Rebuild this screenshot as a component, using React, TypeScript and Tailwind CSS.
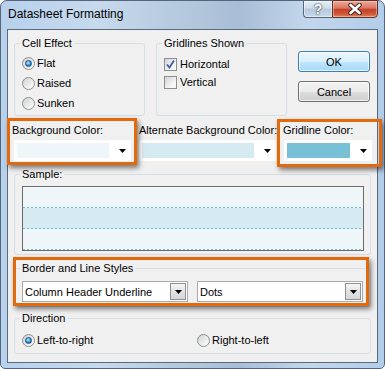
import React from 'react';

const Arrow = () => (
  <svg width="7" height="4" viewBox="0 0 7 4" className="block shrink-0">
    <polygon points="0,0 7,0 3.5,4" fill="#000" />
  </svg>
);

const Radio = ({ checked }: { checked?: boolean }) => (
  <span className="w-[13px] h-[13px] rounded-full border border-[#8e8f8f] bg-[linear-gradient(135deg,#cfd1d4,#ffffff)] flex items-center justify-center shrink-0">
    {checked && (
      <span className="w-[7px] h-[7px] rounded-full border border-[#184f86] bg-[radial-gradient(circle_at_40%_35%,#c4ecff,#2f93d8_55%,#0e4d8c)]" />
    )}
  </span>
);

const CheckBox = ({ checked }: { checked?: boolean }) => (
  <span className="w-[13px] h-[13px] border border-[#8e8f8f] bg-[linear-gradient(135deg,#d0d3d8,#f7f7f7_70%)] flex items-center justify-center shrink-0">
    {checked && (
      <svg width="11" height="11" viewBox="0 0 11 11" className="block">
        <path d="M2 5.5 L4.5 8.5 L9 1.5" fill="none" stroke="#3b5ea5" strokeWidth="1.8" />
      </svg>
    )}
  </span>
);

const ColorDrop = ({ swatch, width }: { swatch: string; width: string }) => (
  <div className={`h-[21px] bg-white flex items-center pl-[3px] pr-[5px] ${width}`}>
    <div className={`flex-1 h-[15px] ${swatch}`} />
    <div className="ml-[10px]">
      <Arrow />
    </div>
  </div>
);

const Combo = ({ text }: { text: string }) => (
  <div className="w-[166px] h-[21px] border border-[#a9abb0] bg-white flex items-center pl-[2px]">
    <span className="flex-1 leading-[14px]">{text}</span>
    <span className="w-[16px] h-[17px] mr-[1px] border border-[#8f9194] bg-[linear-gradient(#f6f6f6,#e2e2e2_50%,#d6d6d6)] flex items-center justify-center">
      <Arrow />
    </span>
  </div>
);

const Group = ({
  label,
  className,
  children,
}: {
  label: string;
  className?: string;
  children: React.ReactNode;
}) => (
  <fieldset className={`border border-[#d5dfe5] rounded-[3px] ${className ?? ''}`}>
    <legend className="ml-[5px] px-[2px] leading-[14px]">{label}</legend>
    {children}
  </fieldset>
);

// orange annotation frames drawn over the dialog
const Highlight = ({ className }: { className: string }) => (
  <div
    className={`absolute border-[3px] border-[#e4690b] shadow-[2px_3px_5px_rgba(0,0,0,0.5)] pointer-events-none ${className}`}
  />
);

export default function App() {
  return (
    <div className="w-[385px] h-[369px] relative font-['Liberation_Sans',Arial,sans-serif] text-[11px] text-black select-none">
      <div className="w-full h-full rounded-t-[7px] rounded-b-[5px] border border-[#55667a] bg-[linear-gradient(90deg,#b7d1ec,#c6d9ed_25%,#b3c7dc_50%,#a8bed6_62%,#c2d6eb_80%,#b2cdea)] flex flex-col px-[6px]">
        {/* title bar */}
        <div className="h-[28px] flex items-start justify-between">
          <span className="pl-[1px] pt-[6px] text-[12px] leading-[14px]">Datasheet Formatting</span>
          <div className="flex -mt-[1px]">
            <div className="w-[29px] h-[18px] border border-[#56677b] border-r-0 rounded-bl-[4px] bg-[linear-gradient(#e6eef6,#cfdcea_45%,#b5c7da_50%,#c9d9ea)] shadow-[inset_0_0_0_1px_rgba(255,255,255,0.45)] flex items-center justify-center">
              <span className="text-[14px] font-bold leading-none text-white [text-shadow:0_0_1px_#2a3645,0_0_2px_#2a3645]">?</span>
            </div>
            <div className="w-[46px] h-[18px] border border-[#5e3327] rounded-br-[4px] bg-[linear-gradient(#eaab9c,#d9755f_45%,#c6402a_52%,#cf5638_80%,#e0865c)] shadow-[inset_0_0_0_1px_rgba(255,220,210,0.45)] flex items-center justify-center">
              <svg width="16" height="12" viewBox="0 0 16 12" className="block">
                <path d="M3.5 2 L12.5 10 M12.5 2 L3.5 10" stroke="#3a2420" strokeWidth="4.4" strokeLinecap="round" />
                <path d="M3.5 2 L12.5 10 M12.5 2 L3.5 10" stroke="#ffffff" strokeWidth="2.6" strokeLinecap="round" />
              </svg>
            </div>
          </div>
        </div>

        {/* client */}
        <div className="h-[334px] border border-[#5a6a7b] bg-[#f0f0f0] flex flex-col">
          <div className="flex items-start pt-[6px] pl-[6px]">
            <Group label="Cell Effect" className="w-[131px] h-[80px]">
              <div className="pt-[3px] pl-[7px]">
                {['Flat', 'Raised', 'Sunken'].map((t, i) => (
                  <div key={t} className="h-[20px] flex items-center gap-[2px]">
                    <Radio checked={i === 0} />
                    <span>{t}</span>
                  </div>
                ))}
              </div>
            </Group>
            <Group label="Gridlines Shown" className="w-[131px] h-[80px] ml-[11px]">
              <div className="pt-[5px] pl-[7px]">
                <div className="h-[18px] flex items-center gap-[3px]">
                  <CheckBox checked />
                  <span>Horizontal</span>
                </div>
                <div className="h-[18px] flex items-center gap-[3px]">
                  <CheckBox />
                  <span>Vertical</span>
                </div>
              </div>
            </Group>
            <div className="ml-[11px] mt-[15px] w-[72px] flex flex-col gap-[9px]">
              <button className="h-[21px] rounded-[3px] border border-[#3c7fb1] bg-[linear-gradient(#eaf6fd,#d9f0fc_50%,#bee6fd_51%,#a7d9f5)] shadow-[inset_0_0_0_1px_rgba(255,255,255,0.7)] leading-[14px]">
                OK
              </button>
              <button className="h-[21px] rounded-[3px] border border-[#707070] bg-[linear-gradient(#f2f2f2,#ebebeb_50%,#dddddd_51%,#cfcfcf)] shadow-[inset_0_0_0_1px_rgba(255,255,255,0.7)] leading-[14px]">
                Cancel
              </button>
            </div>
          </div>

          <div className="flex mt-[7px] pl-[4px]">
            <div className="w-[125px]">
              <div className="leading-[14px]">Background Color:</div>
              <div className="mt-[3px] ml-[2px]">
                <ColorDrop swatch="bg-[#eef6f9]" width="w-[117px]" />
              </div>
            </div>
            <div className="w-[138px] ml-[2px]">
              <div className="leading-[14px] whitespace-nowrap">Alternate Background Color:</div>
              <div className="mt-[3px]">
                <ColorDrop swatch="bg-[#d5ebf1]" width="w-[137px]" />
              </div>
            </div>
            <div className="w-[89px] ml-[6px]">
              <div className="leading-[14px]">Gridline Color:</div>
              <div className="mt-[3px] ml-[1px]">
                <ColorDrop swatch="bg-[#78c0d5]" width="w-[88px]" />
              </div>
            </div>
          </div>

          <Group label="Sample:" className="mt-[6px] ml-[6px] w-[357px] pb-[3px]">
            <div className="mt-[5px] ml-[7px] w-[342px] border border-[#6b6b6b]">
              {['bg-[#eef6f9]', 'bg-[#d5ebf1]', 'bg-[#eef6f9]'].map((bg, i) => (
                <div key={i} className={`h-[21px] flex flex-col ${bg}`}>
                  <div className="flex-1" />
                  <div className="h-[1px] bg-[repeating-linear-gradient(90deg,#6fbfd5_0_2px,transparent_2px_4px)]" />
                </div>
              ))}
            </div>
          </Group>

          <Group label="Border and Line Styles" className="mt-[6px] ml-[6px] w-[357px] pb-[4px]">
            <div className="mt-[6px] ml-[7px] flex gap-[9px]">
              <Combo text="Column Header Underline" />
              <Combo text="Dots" />
            </div>
          </Group>

          <Group label="Direction" className="mt-[4px] ml-[6px] w-[357px] pb-[3px]">
            <div className="mt-[5px] h-[20px] pl-[7px] flex items-center">
              <div className="w-[175px] flex items-center gap-[2px]">
                <Radio checked />
                <span>Left-to-right</span>
              </div>
              <div className="flex items-center gap-[2px]">
                <Radio />
                <span>Right-to-left</span>
              </div>
            </div>
          </Group>
        </div>
      </div>

      <Highlight className="left-[7px] top-[118px] w-[130px] h-[47px]" />
      <Highlight className="left-[277px] top-[119px] w-[105px] h-[48px]" />
      <Highlight className="left-[13px] top-[257px] w-[356px] h-[49px]" />
    </div>
  );
}
